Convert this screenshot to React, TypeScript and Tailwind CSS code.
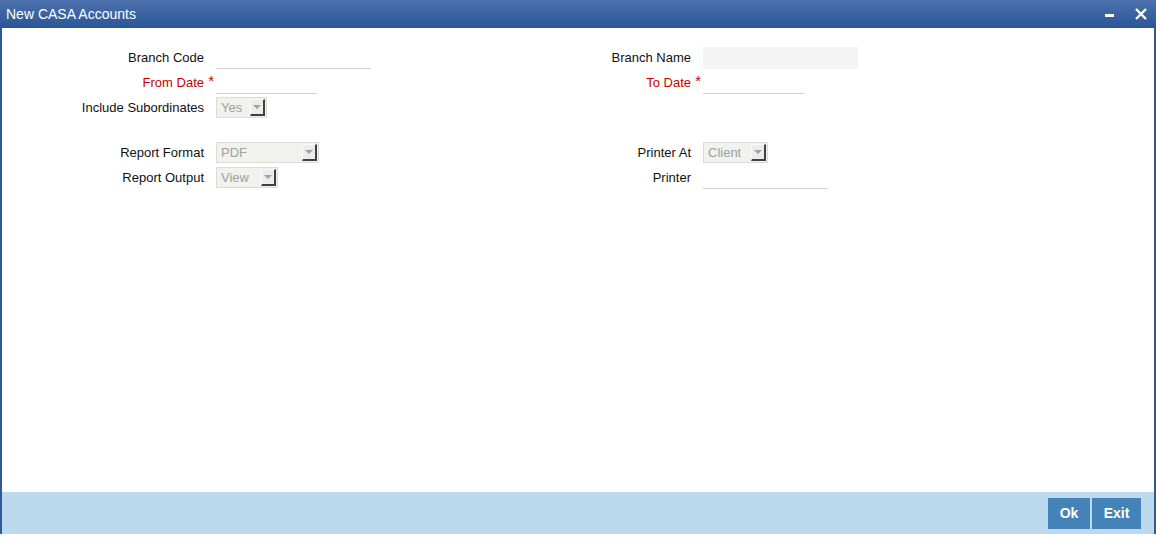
const font = { fontFamily: '"Liberation Sans", Arial, sans-serif' };

function Label({ text, required }: { text: string; required?: boolean }) {
  return (
    <div className={`relative w-[202px] shrink-0 text-right text-[13px] ${required ? 'text-[#cc0000]' : 'text-[#111]'}`}>
      {text}
      {required && <span className="absolute -right-[10px] -top-[3px] text-[15px] text-[#cc0000]">*</span>}
    </div>
  );
}

function Line({ w }: { w: string }) {
  return <div className={`${w} ml-3 h-[22px] border-b border-[#d0d0d0]`} />;
}

function Select({ value, w }: { value: string; w: string }) {
  return (
    <div className={`${w} ml-3 flex h-[21px] items-center justify-between border border-[#dcdcd4] bg-[#f1f1ed] pl-1 text-[13px] text-[#a0a0a0]`}>
      <span>{value}</span>
      <div className="mr-[1px] flex h-[17px] w-[15px] items-center justify-center border-b-2 border-r-2 border-b-[#404040] border-r-[#404040] border-l border-t border-l-[#fafafa] border-t-[#fafafa] bg-[#ececec]">
        <div className="h-0 w-0 border-x-[4px] border-t-[4px] border-x-transparent border-t-[#a0a0a0]" />
      </div>
    </div>
  );
}

function Row({ children }: { children: React.ReactNode }) {
  return <div className="flex h-[25px] items-center">{children}</div>;
}

export default function App() {
  return (
    <div className="flex h-[541px] w-[1156px] flex-col bg-white" style={font}>
      <div className="flex h-[28px] shrink-0 items-center justify-between bg-gradient-to-b from-[#4d72ad] to-[#2a5596] pl-[6px] pr-[9px]">
        <span className="text-[14px] text-white">New CASA Accounts</span>
        <div className="flex items-center gap-[21px]">
          <div className="mt-[2px] h-[3px] w-[9px] bg-white" />
          <svg width="12" height="12" viewBox="0 0 12 12">
            <path d="M1 1 L11 11 M11 1 L1 11" stroke="white" strokeWidth="2.4" />
          </svg>
        </div>
      </div>
      <div className="flex flex-1 flex-col border-x-2 border-x-[#2f5a98]">
        <div className="flex flex-1 pt-[17px]">
          <div className="w-[487px] shrink-0">
            <Row>
              <Label text="Branch Code" />
              <Line w="w-[155px]" />
            </Row>
            <Row>
              <Label text="From Date" required />
              <Line w="w-[101px]" />
            </Row>
            <Row>
              <Label text="Include Subordinates" />
              <Select value="Yes" w="w-[51px]" />
            </Row>
            <div className="h-[20px]" />
            <Row>
              <Label text="Report Format" />
              <Select value="PDF" w="w-[103px]" />
            </Row>
            <Row>
              <Label text="Report Output" />
              <Select value="View" w="w-[62px]" />
            </Row>
          </div>
          <div className="flex-1">
            <Row>
              <Label text="Branch Name" />
              <div className="ml-3 h-[22px] w-[155px] bg-[#f4f4f4]" />
            </Row>
            <Row>
              <Label text="To Date" required />
              <Line w="w-[101px]" />
            </Row>
            <Row>
              <div />
            </Row>
            <div className="h-[20px]" />
            <Row>
              <Label text="Printer At" />
              <Select value="Client" w="w-[65px]" />
            </Row>
            <Row>
              <Label text="Printer" />
              <Line w="w-[125px]" />
            </Row>
          </div>
        </div>
        <div className="flex h-[42px] shrink-0 items-center justify-end gap-[2px] bg-[#bdd9ed] pr-[13px]">
          <button className="h-[31px] w-[42px] bg-[#4483b7] text-[14px] font-bold text-white">Ok</button>
          <button className="h-[31px] w-[49px] bg-[#4483b7] text-[14px] font-bold text-white">Exit</button>
        </div>
      </div>
      <div className="h-[7px] shrink-0 bg-white" />
    </div>
  );
}
